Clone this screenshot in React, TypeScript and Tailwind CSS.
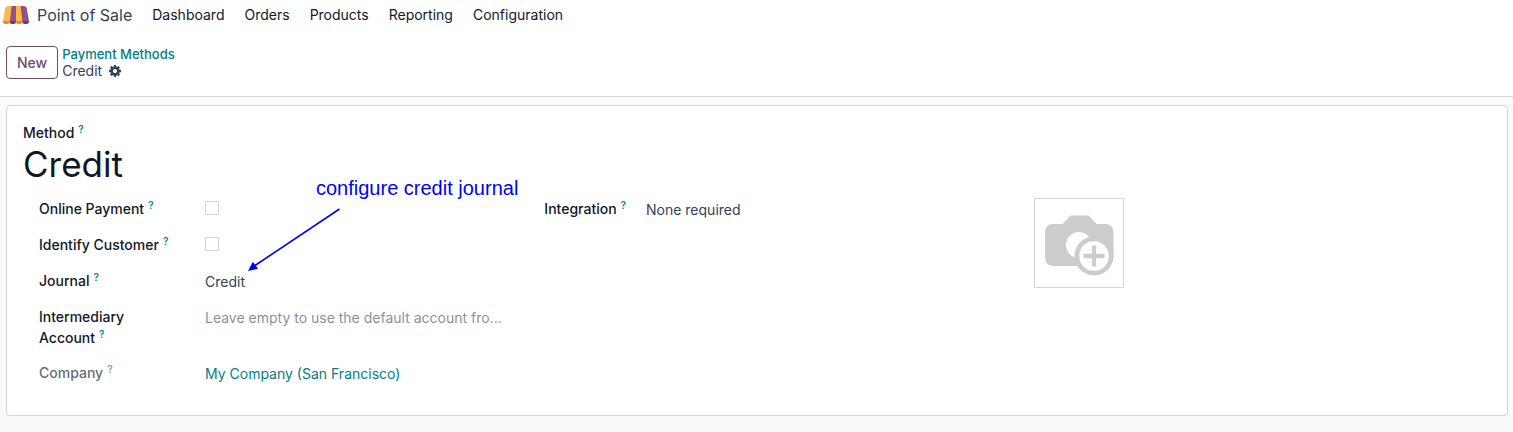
import React from "react";

function StoreLogo() {
  return (
    <svg width="28" height="20" viewBox="0 0 28 20" aria-hidden="true">
      <path d="M6.200 1H9.500L7.800 16H1L3.300 3.200Q3.700 1 6.200 1Z" fill="#FBB945" />
      <path d="M9.500 1H14v15H7.800Z" fill="#985184" />
      <path d="M14 1h4.500l1.700 15H14Z" fill="#FBB945" />
      <path d="M18.500 1h3.300q2.500 0 2.900 2.200L27 16h-6.800Z" fill="#985184" />
      <path d="M1 16h6.850L7.700 17q-.4 2-2.200 2H3.400Q1.200 19 1 17Z" fill="#F78613" />
      <path d="M7.850 16H14V17q-.2 2-2 2H9.700q-1.800 0-2-2Z" fill="#6B3E66" />
      <path d="M14 16h6.150l.15 1q-.2 2-2 2H16q-1.800 0-2-2Z" fill="#F78613" />
      <path d="M20.150 16H27V17q-.2 2-2.400 2h-2.100q-1.800 0-2.200-2Z" fill="#6B3E66" />
    </svg>
  );
}

function GearIcon() {
  return (
    <svg width="12" height="12" viewBox="0 0 1536 1536" fill="currentColor" aria-hidden="true">
      <path d="M1024 768q0-106-75-181t-181-75-181 75-75 181 75 181 181 75 181-75 75-181zm512-109v222q0 12-8 23t-20 13l-185 28q-19 54-39 91 35 50 107 138 10 12 10 25t-9 23q-27 37-99 108t-94 71q-12 0-26-9l-138-108q-44 23-91 38-16 136-29 186-7 28-36 28H657q-14 0-24.500-8.500T621 1506l-28-184q-49-16-90-37l-141 107q-10 9-25 9-14 0-25-11-126-114-165-168-7-10-7-23 0-12 8-23 15-21 51-66.500t54-70.500q-27-50-41-99L29 913q-13-2-21-12.500T0 877V655q0-12 8-23t19-13l186-28q14-46 39-92-40-57-107-138-10-12-10-24 0-10 9-23 26-36 98.500-107.500T337 135q13 0 26 10l138 107q44-23 91-38 16-136 29-186 7-28 36-28h222q14 0 24.500 8.500T915 30l28 184q49 16 90 37l142-107q9-9 24-9 13 0 25 10 129 119 165 170 7 8 7 22 0 12-8 23-15 21-51 66.500t-54 70.500q26 50 41 98l183 28q13 2 21 12.500t8 23.500z" />
    </svg>
  );
}

function CameraIcon() {
  return (
    <svg width="72" height="64" viewBox="-1 0 72 64" aria-hidden="true">
      <path d="M9 10h9.500l8-8.500h18l8 8.500H61q8.500 0 8.500 9v24q0 9-8.500 9H10q-9 0-9-9V19q0-9 8-9Z" fill="#ccc" />
      <circle cx="35" cy="31" r="13" fill="#fff" />
      <circle cx="50" cy="42" r="19.500" fill="#ccc" />
      <circle cx="50" cy="42" r="14.800" fill="#fff" />
      <path d="M47.800 31.500h4.400v8.300h8.300v4.400h-8.300v8.300h-4.400v-8.300h-8.300v-4.400h8.300Z" fill="#ccc" />
    </svg>
  );
}

function FieldLabel({ id, text, muted }: { id: string; text: string; muted?: boolean }) {
  return (
    <label
      htmlFor={id}
      className={
        muted
          ? "block text-sm/[21px] font-medium text-gray-900 opacity-65"
          : "block text-sm/[21px] font-medium text-gray-900"
      }
    >
      {text}
      <sup className="ml-1 text-[10px] font-semibold text-[#0180a5]">?</sup>
    </label>
  );
}

const menu = ["Dashboard", "Orders", "Products", "Reporting", "Configuration"];
const control = "block w-full bg-transparent text-sm/[21px] text-gray-700 outline-none";
const checkbox = "mt-[3px] block size-3.5 appearance-none border border-gray-300 bg-white checked:bg-[#714b67]";

export default function App() {
  return (
    <div className="min-h-screen bg-gray-50 font-['Inter',sans-serif] text-sm text-gray-700">
      <header className="border-b border-gray-300 bg-white">
        <nav className="flex h-[30px] items-center pl-0.5">
          <a href="#home" className="flex items-center gap-[7px] text-base text-gray-700">
            <StoreLogo />
            Point of Sale
          </a>
          <div className="ml-5 flex gap-5">
            {menu.map((item) => (
              <a key={item} href={"#" + item.toLowerCase()} className="text-gray-900">
                {item}
              </a>
            ))}
          </div>
        </nav>
        <div className="flex items-center gap-1 px-1.5 pt-4 pb-[17px]">
          <button
            type="button"
            className="h-[33px] rounded border border-[#714b67] px-2.5 font-medium text-[#714b67]"
          >
            New
          </button>
          <div>
            <a href="#methods" className="block text-[13px]/4 font-medium text-[#017e84]">
              Payment Methods
            </a>
            <div className="flex items-center gap-[7px] leading-[17px]">
              Credit
              <button type="button" aria-label="Actions">
                <GearIcon />
              </button>
            </div>
          </div>
        </div>
      </header>

      <main className="py-2 pr-[5px] pl-1.5">
        <form className="rounded border border-gray-300 bg-white px-4 pt-4 pb-[31px]">
          <FieldLabel id="method" text="Method" />
          <input
            id="method"
            defaultValue="Credit"
            className="block h-[42px] w-full bg-transparent text-[35px] text-gray-900 outline-none"
          />
          <div className="mt-[13px] grid grid-cols-3">
            <div className="relative grid auto-rows-[minmax(22px,auto)] grid-cols-[150px_1fr] content-start gap-x-4 gap-y-3.5 pr-2 pl-4">
              <FieldLabel id="online" text="Online Payment" />
              <input id="online" type="checkbox" className={checkbox} />
              <FieldLabel id="identify" text="Identify Customer" />
              <input id="identify" type="checkbox" className={checkbox} />
              <FieldLabel id="journal" text="Journal" />
              <input id="journal" defaultValue="Credit" className={control + " mt-px"} />
              <div className="w-28">
                <FieldLabel id="account" text="Intermediary Account" />
              </div>
              <input
                id="account"
                placeholder="Leave empty to use the default account fro..."
                className={control + " mt-px self-start placeholder:text-gray-700/60"}
              />
              <FieldLabel id="company" text="Company" muted />
              <a id="company" href="#company" className="mt-px text-sm/[21px] text-[#017e84]">
                My Company (San Francisco)
              </a>
              <div className="pointer-events-none absolute top-[-22px] left-[225px] text-[#0000ff]">
                <p className="ml-[68px] font-['Liberation_Sans',sans-serif] text-xl/6 whitespace-nowrap">
                  configure credit journal
                </p>
                <svg className="mt-1" width="94" height="68" viewBox="0 0 94 68" aria-hidden="true">
                  <path d="M91.500 5 7 61.500" stroke="currentColor" strokeWidth="1.600" />
                  <path d="M0 67 4.800 57.700 10 64.800Z" fill="currentColor" />
                </svg>
              </div>
            </div>
            <div className="flex gap-5 pl-8">
              <FieldLabel id="integration" text="Integration" />
              <select id="integration" className="mt-px h-[21px] appearance-none bg-transparent outline-none">
                <option>None required</option>
              </select>
            </div>
            <div className="pl-8">
              <button
                type="button"
                aria-label="Upload image"
                className="flex size-[90px] items-center justify-center border border-gray-300 pt-1.5"
              >
                <CameraIcon />
              </button>
            </div>
          </div>
        </form>
      </main>
    </div>
  );
}
